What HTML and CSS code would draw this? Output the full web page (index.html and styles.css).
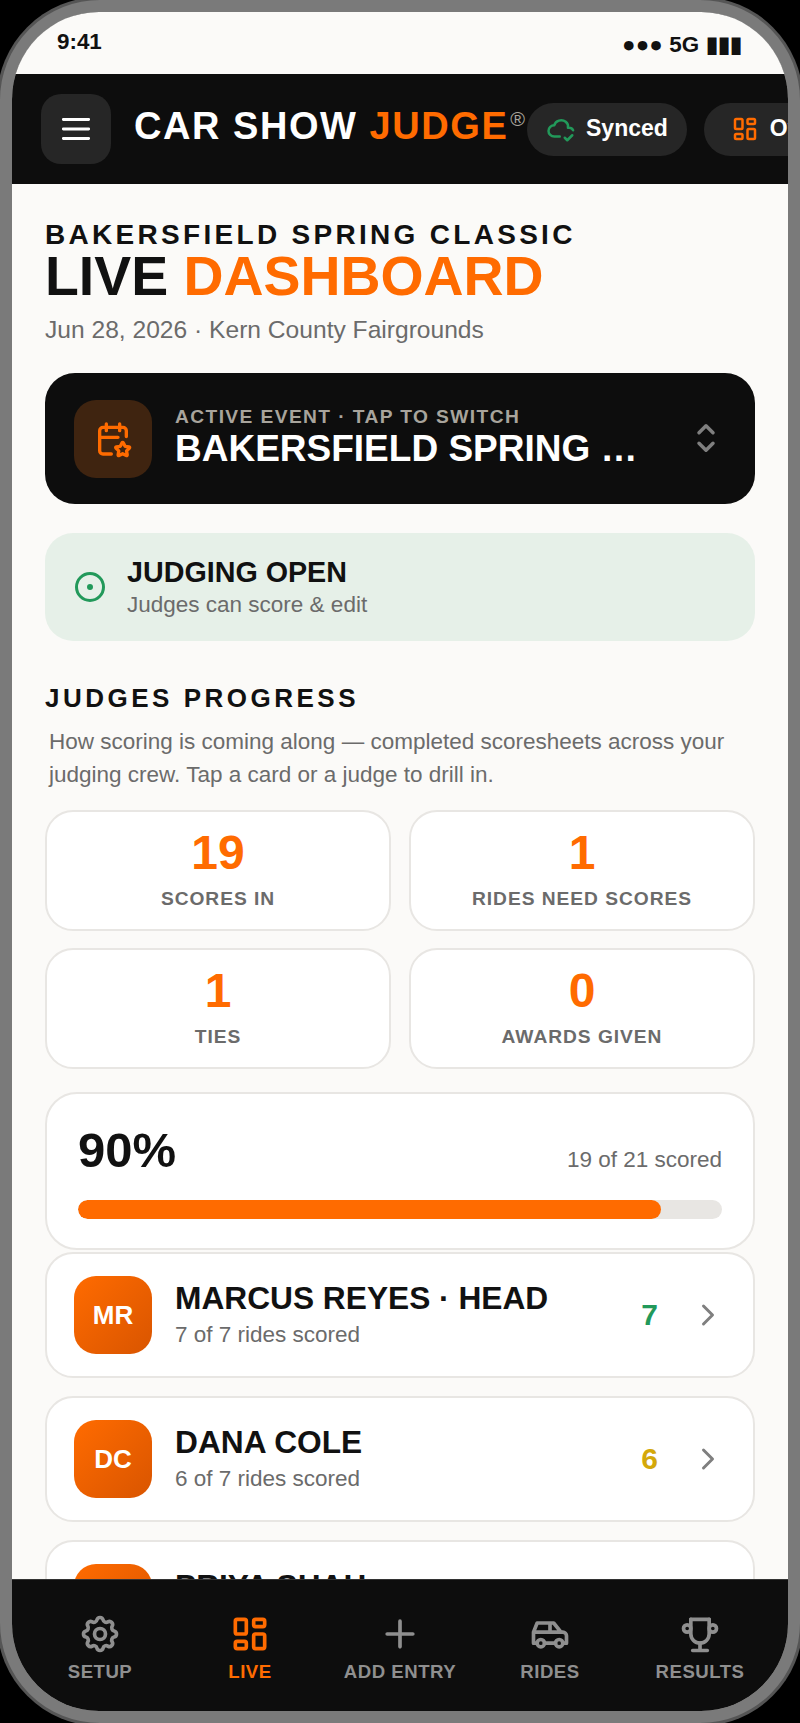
FILE: index.html
```html
<!DOCTYPE html>
<html lang="en">
<head>
<meta charset="utf-8">
<title>Car Show Judge</title>
<link rel="stylesheet" href="styles.css">
</head>
<body>
<div class="phone">
  <div class="screen">
    <div class="status">
      <span class="time">9:41</span>
      <span class="signal">●●● 5G ▮▮▮</span>
    </div>
    <header class="topbar">
      <button class="menu" aria-label="Menu">
        <svg class="ico-menu" viewBox="0 0 24 24"><path d="M4 6h16M4 12h16M4 18h16"/></svg>
      </button>
      <div class="brand">CAR SHOW <span class="accent">JUDGE</span><sup class="reg">®</sup></div>
      <div class="pill">
        <svg class="ico-pill green" viewBox="0 0 24 24"><path d="M11 18.004h-4.343c-2.572 -.004 -4.657 -2.011 -4.657 -4.487c0 -2.475 2.085 -4.482 4.657 -4.482c.393 -1.762 1.794 -3.2 3.675 -3.773c1.88 -.572 3.956 -.193 5.444 1c1.488 1.19 2.162 3.007 1.77 4.769h.99c1.388 0 2.585 .82 3.138 2.007"/><path d="M15 19l2 2l4 -4"/></svg>
        <span class="pill-text">Synced</span>
      </div>
      <div class="pill pill-alt">
        <svg class="ico-pill orange" viewBox="0 0 24 24"><path d="M5 4h4a1 1 0 0 1 1 1v6a1 1 0 0 1 -1 1h-4a1 1 0 0 1 -1 -1v-6a1 1 0 0 1 1 -1"/><path d="M5 16h4a1 1 0 0 1 1 1v2a1 1 0 0 1 -1 1h-4a1 1 0 0 1 -1 -1v-2a1 1 0 0 1 1 -1"/><path d="M15 12h4a1 1 0 0 1 1 1v6a1 1 0 0 1 -1 1h-4a1 1 0 0 1 -1 -1v-6a1 1 0 0 1 1 -1"/><path d="M15 4h4a1 1 0 0 1 1 1v2a1 1 0 0 1 -1 1h-4a1 1 0 0 1 -1 -1v-2a1 1 0 0 1 1 -1"/></svg>
        <span class="pill-text">Overview</span>
      </div>
    </header>
    <main class="content">
      <div class="eyebrow">BAKERSFIELD SPRING CLASSIC</div>
      <h1 class="headline">LIVE <span class="accent">DASHBOARD</span></h1>
      <div class="meta">Jun 28, 2026 · Kern County Fairgrounds</div>

      <div class="event">
        <div class="event-icon">
          <svg viewBox="0 0 24 24"><path d="M11 21h-5a2 2 0 0 1 -2 -2v-12a2 2 0 0 1 2 -2h12a2 2 0 0 1 2 2v3.5"/><path d="M16 3v4M8 3v4M4 11h11"/><path d="M17.8 20.817l-2.172 1.138a.392 .392 0 0 1 -.568 -.41l.415 -2.411l-1.757 -1.707a.389 .389 0 0 1 .217 -.665l2.428 -.352l1.086 -2.193a.392 .392 0 0 1 .702 0l1.086 2.193l2.428 .352a.39 .39 0 0 1 .217 .665l-1.757 1.707l.414 2.41a.39 .39 0 0 1 -.567 .411l-2.172 -1.138z"/></svg>
        </div>
        <div class="event-text">
          <div class="event-label">ACTIVE EVENT · TAP TO SWITCH</div>
          <div class="event-name">BAKERSFIELD SPRING …</div>
        </div>
        <svg class="ico-selector" viewBox="0 0 24 24"><path d="M8 9l4 -4l4 4"/><path d="M16 15l-4 4l-4 -4"/></svg>
      </div>

      <div class="open">
        <svg class="ico-open" viewBox="0 0 24 24"><circle cx="12" cy="12" r="9"/><circle class="dot" cx="12" cy="12" r="1"/></svg>
        <div>
          <div class="open-title">JUDGING OPEN</div>
          <div class="open-sub">Judges can score &amp; edit</div>
        </div>
      </div>

      <h2 class="section">JUDGES PROGRESS</h2>
      <p class="desc">How scoring is coming along — completed scoresheets across your judging crew. Tap a card or a judge to drill in.</p>

      <div class="stats">
        <div class="stat"><div class="num">19</div><div class="lbl">SCORES IN</div></div>
        <div class="stat"><div class="num">1</div><div class="lbl">RIDES NEED SCORES</div></div>
        <div class="stat"><div class="num">1</div><div class="lbl">TIES</div></div>
        <div class="stat"><div class="num">0</div><div class="lbl">AWARDS GIVEN</div></div>
      </div>

      <div class="progress">
        <div class="progress-top">
          <span class="pct">90%</span>
          <span class="scored">19 of 21 scored</span>
        </div>
        <div class="track"><div class="fill" style="width:90.5%"></div></div>
      </div>

      <div class="judges">
        <div class="judge">
          <div class="avatar">MR</div>
          <div class="who"><div class="name">MARCUS REYES · HEAD</div><div class="sub">7 of 7 rides scored</div></div>
          <div class="count green-t">7</div>
          <svg class="ico-chev" viewBox="0 0 24 24"><path d="M9 6l6 6l-6 6"/></svg>
        </div>
        <div class="judge">
          <div class="avatar">DC</div>
          <div class="who"><div class="name">DANA COLE</div><div class="sub">6 of 7 rides scored</div></div>
          <div class="count yellow-t">6</div>
          <svg class="ico-chev" viewBox="0 0 24 24"><path d="M9 6l6 6l-6 6"/></svg>
        </div>
        <div class="judge">
          <div class="avatar">PS</div>
          <div class="who"><div class="name">PRIYA SHAH</div><div class="sub">6 of 7 rides scored</div></div>
          <div class="count yellow-t">6</div>
          <svg class="ico-chev" viewBox="0 0 24 24"><path d="M9 6l6 6l-6 6"/></svg>
        </div>
      </div>
    </main>
    <nav class="tabs">
      <div class="tab">
        <svg viewBox="0 0 24 24"><path d="M10.325 4.317c.426 -1.756 2.924 -1.756 3.35 0a1.724 1.724 0 0 0 2.573 1.066c1.543 -.94 3.31 .826 2.37 2.37a1.724 1.724 0 0 0 1.065 2.572c1.756 .426 1.756 2.924 0 3.35a1.724 1.724 0 0 0 -1.066 2.573c.94 1.543 -.826 3.31 -2.37 2.37a1.724 1.724 0 0 0 -2.572 1.065c-.426 1.756 -2.924 1.756 -3.35 0a1.724 1.724 0 0 0 -2.573 -1.066c-1.543 .94 -3.31 -.826 -2.37 -2.37a1.724 1.724 0 0 0 -1.065 -2.572c-1.756 -.426 -1.756 -2.924 0 -3.35a1.724 1.724 0 0 0 1.066 -2.573c-.94 -1.543 .826 -3.31 2.37 -2.37c1 .608 2.296 .07 2.572 -1.065z"/><circle cx="12" cy="12" r="3"/></svg>
        <span>SETUP</span>
      </div>
      <div class="tab active">
        <svg viewBox="0 0 24 24"><path d="M5 4h4a1 1 0 0 1 1 1v6a1 1 0 0 1 -1 1h-4a1 1 0 0 1 -1 -1v-6a1 1 0 0 1 1 -1"/><path d="M5 16h4a1 1 0 0 1 1 1v2a1 1 0 0 1 -1 1h-4a1 1 0 0 1 -1 -1v-2a1 1 0 0 1 1 -1"/><path d="M15 12h4a1 1 0 0 1 1 1v6a1 1 0 0 1 -1 1h-4a1 1 0 0 1 -1 -1v-6a1 1 0 0 1 1 -1"/><path d="M15 4h4a1 1 0 0 1 1 1v2a1 1 0 0 1 -1 1h-4a1 1 0 0 1 -1 -1v-2a1 1 0 0 1 1 -1"/></svg>
        <span>LIVE</span>
      </div>
      <div class="tab">
        <svg viewBox="0 0 24 24"><path d="M12 5v14M5 12h14"/></svg>
        <span>ADD ENTRY</span>
      </div>
      <div class="tab">
        <svg viewBox="0 0 24 24"><circle cx="7" cy="17" r="2"/><circle cx="17" cy="17" r="2"/><path d="M5 17h-2v-6l2 -5h9l4 5h1a2 2 0 0 1 2 2v4h-2m-4 0h-6m-6 -6h15m-6 0v-5"/></svg>
        <span>RIDES</span>
      </div>
      <div class="tab">
        <svg viewBox="0 0 24 24"><path d="M8 21h8M12 17v4M7 4h10"/><path d="M17 4v8a5 5 0 0 1 -10 0v-8"/><circle cx="5" cy="9" r="2"/><circle cx="19" cy="9" r="2"/></svg>
        <span>RESULTS</span>
      </div>
    </nav>
  </div>
</div>
</body>
</html>
```
FILE: styles.css
```css
* { box-sizing: border-box; }
html, body { margin: 0; padding: 0; background: #000; }
body { width: 800px; height: 1723px; overflow: hidden; font-family: "Liberation Sans", Arial, sans-serif; color: #111; }
svg { fill: none; stroke: currentColor; stroke-width: 2; stroke-linecap: round; stroke-linejoin: round; display: block; flex-shrink: 0; }
.phone { width: 800px; height: 1723px; border: 12px solid #7a7a7a; border-radius: 100px; box-shadow: 0 0 0 3px #555; background: #0d0d0d; }
.screen { height: 100%; border-radius: 87px; overflow: hidden; display: flex; flex-direction: column; background: #fbfaf8; }
.accent { color: #ff6b00; }

.status { height: 62px; flex-shrink: 0; display: flex; justify-content: space-between; align-items: center; padding: 0 46px 0 45px; font-weight: 700; font-size: 22.4px; color: #111; }
.time { position: relative; top: -1px; }
.signal { position: relative; top: 1px; letter-spacing: .1px; }

.topbar { height: 110px; flex-shrink: 0; display: flex; align-items: center; background: #0d0d0d; padding-left: 29px; overflow: hidden; }
.menu { width: 70px; height: 70px; flex-shrink: 0; border: 0; padding: 0; border-radius: 20px; background: #262626; color: #fff; display: flex; align-items: center; justify-content: center; }
.ico-menu { width: 38px; height: 38px; stroke-width: 1.8; }
.brand { flex-shrink: 0; margin: -6px 0 0 23px; font-size: 38px; font-weight: 700; letter-spacing: 1.55px; color: #fff; white-space: nowrap; width: 393px; }
.reg { font-size: 20px; font-weight: 400; color: #a8a49c; letter-spacing: 0; vertical-align: 13px; line-height: 0; margin-left: 2px; }
.pill { flex-shrink: 0; height: 53px; border-radius: 27px; background: #262626; color: #fff; display: flex; align-items: center; gap: 10px; padding: 0 19px 0 19px; font-size: 23px; font-weight: 700; margin-right: 17px; }
.pill-alt { padding-left: 26px; }
.pill-text { margin-top: -2px; }
.ico-pill { width: 30px; height: 30px; }
.green { color: #22995a; }
.orange { color: #ff6b00; }

.content { flex: 1; min-height: 0; overflow: hidden; padding: 35px 33px 0; }
.eyebrow { font-size: 28px; font-weight: 700; letter-spacing: 3.3px; line-height: 32px; }
.headline { margin: 0; font-size: 55.4px; font-weight: 700; line-height: 50px; }
.meta { margin-top: 12px; font-size: 24.6px; line-height: 34px; color: #6b6b6b; }

.event { margin-top: 26px; height: 131px; border-radius: 30px; background: #0d0d0d; display: flex; align-items: center; padding: 0 28px 0 29px; }
.event-icon { width: 78px; height: 78px; flex-shrink: 0; border-radius: 22px; background: #3f2410; color: #ff6b00; display: flex; align-items: center; justify-content: center; }
.event-icon svg { width: 40px; height: 40px; }
.event-text { flex: 1; min-width: 0; margin: -4px 0 0 23px; }
.event-label { font-size: 19.2px; font-weight: 700; letter-spacing: 1.4px; line-height: 24px; color: #a8a49c; }
.event-name { font-size: 37px; font-weight: 700; line-height: 40px; color: #fff; white-space: nowrap; }
.ico-selector { width: 42px; height: 42px; color: #7f7f7f; margin-top: -2px; }

.open { margin-top: 29px; height: 108px; border-radius: 28px; background: #e6f0e8; display: flex; align-items: center; padding: 0 29px 0 27px; gap: 19px; }
.ico-open { width: 36px; height: 36px; color: #22995a; }
.ico-open .dot { fill: currentColor; }
.open-title { font-size: 28.7px; font-weight: 700; line-height: 34px; color: #111; }
.open-sub { font-size: 22.5px; line-height: 31px; color: #6b6b6b; }

.section { margin: 42px 0 0; font-size: 26px; font-weight: 700; letter-spacing: 3.5px; line-height: 30px; }
.desc { margin: 12px 0 0; padding-left: 4px; font-size: 22.5px; line-height: 33px; color: #6b6b6b; }

.stats { margin-top: 19px; display: grid; grid-template-columns: 1fr 1fr; gap: 17px 18px; }
.stat { height: 121px; border: 2px solid #e8e6e3; border-radius: 28px; background: #fff; display: flex; flex-direction: column; align-items: center; justify-content: center; padding-bottom: 3px; }
.num { font-size: 48px; font-weight: 700; line-height: 50px; color: #ff6b00; }
.lbl { margin-top: 9px; font-size: 19.2px; font-weight: 700; letter-spacing: .96px; line-height: 24px; color: #6b6b6b; }

.progress { margin-top: 23px; height: 158px; border: 2px solid #e8e6e3; border-radius: 32px; background: #fff; padding: 28px 31px 0; }
.progress-top { display: flex; justify-content: space-between; align-items: baseline; }
.pct { font-size: 49px; font-weight: 700; line-height: 56px; }
.scored { font-size: 22.5px; color: #6b6b6b; }
.track { margin-top: 22px; height: 19px; border-radius: 10px; background: #e8e6e3; overflow: hidden; }
.fill { height: 100%; border-radius: 10px; background: #ff6b00; }

.judges { margin-top: 2px; display: flex; flex-direction: column; gap: 18px; }
.judge { height: 126px; flex-shrink: 0; border: 2px solid #e8e6e3; border-radius: 28px; background: #fff; display: flex; align-items: center; padding: 0 28px 0 27px; }
.avatar { width: 78px; height: 78px; flex-shrink: 0; border-radius: 22px; background: linear-gradient(135deg, #ff6b00, #d95500); color: #fff; font-size: 26px; font-weight: 700; display: flex; align-items: center; justify-content: center; }
.who { flex: 1; min-width: 0; margin-left: 23px; }
.name { font-size: 31.7px; font-weight: 700; line-height: 38px; margin-top: -1px; }
.sub { margin-top: 3px; font-size: 22.5px; line-height: 30px; color: #6b6b6b; }
.count { font-size: 30px; font-weight: 700; margin-right: 32px; }
.green-t { color: #22995a; }
.yellow-t { color: #d4a80a; }
.ico-chev { width: 36px; height: 36px; color: #7f7f7f; margin-right: -1px; }

.tabs { height: 132px; flex-shrink: 0; display: grid; grid-template-columns: repeat(5, 150px); padding: 32px 0 0 13px; background: #0d0d0d; border-top: 1px solid #333; }
.tab { display: flex; flex-direction: column; align-items: center; gap: 5px; color: #8f8f8f; font-size: 18.6px; font-weight: 700; letter-spacing: .5px; }
.tab svg { width: 44px; height: 44px; }
.tab.active { color: #ff6b00; }
```
